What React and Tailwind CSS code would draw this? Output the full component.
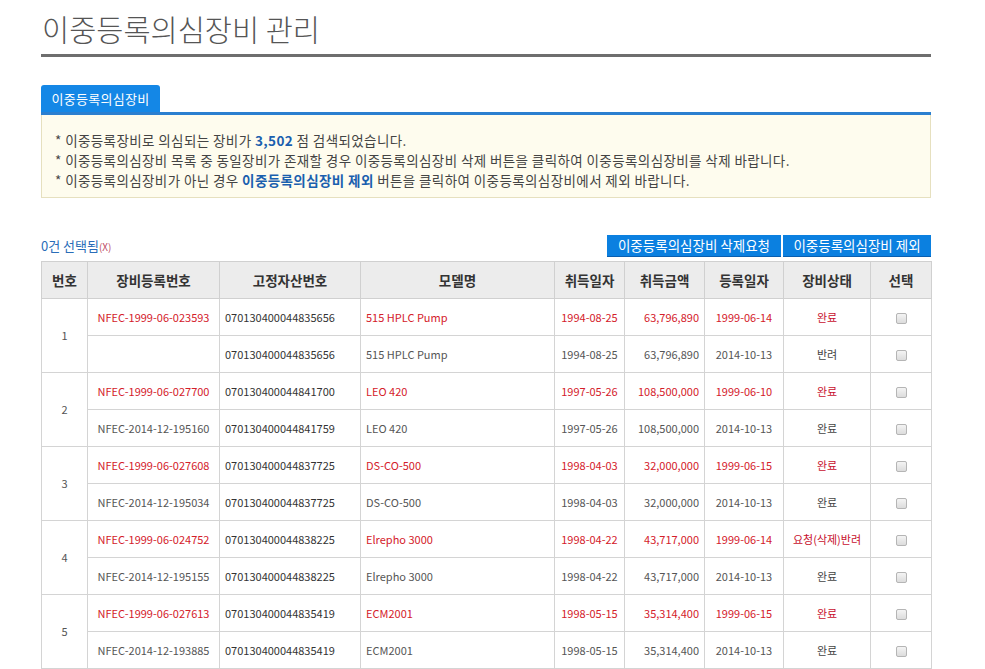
import React from "react";

const rows = [
  {
    n: 1,
    a: ["NFEC-1999-06-023593", "070130400044835656", "515 HPLC Pump", "1994-08-25", "63,796,890", "1999-06-14", "완료"],
    b: ["", "070130400044835656", "515 HPLC Pump", "1994-08-25", "63,796,890", "2014-10-13", "반려"],
  },
  {
    n: 2,
    a: ["NFEC-1999-06-027700", "070130400044841700", "LEO 420", "1997-05-26", "108,500,000", "1999-06-10", "완료"],
    b: ["NFEC-2014-12-195160", "070130400044841759", "LEO 420", "1997-05-26", "108,500,000", "2014-10-13", "완료"],
  },
  {
    n: 3,
    a: ["NFEC-1999-06-027608", "070130400044837725", "DS-CO-500", "1998-04-03", "32,000,000", "1999-06-15", "완료"],
    b: ["NFEC-2014-12-195034", "070130400044837725", "DS-CO-500", "1998-04-03", "32,000,000", "2014-10-13", "완료"],
  },
  {
    n: 4,
    a: ["NFEC-1999-06-024752", "070130400044838225", "Elrepho 3000", "1998-04-22", "43,717,000", "1999-06-14", "요청(삭제)반려"],
    b: ["NFEC-2014-12-195155", "070130400044838225", "Elrepho 3000", "1998-04-22", "43,717,000", "2014-10-13", "완료"],
  },
  {
    n: 5,
    a: ["NFEC-1999-06-027613", "070130400044835419", "ECM2001", "1998-05-15", "35,314,400", "1999-06-15", "완료"],
    b: ["NFEC-2014-12-193885", "070130400044835419", "ECM2001", "1998-05-15", "35,314,400", "2014-10-13", "완료"],
  },
];

const td = "border border-[#d4d4d4] h-[37px] p-0 text-[11px]";

function Cells({ d, red }) {
  const c = red ? "text-[#d4202a]" : "text-[#555]";
  return (
    <>
      <td className={`${td} ${c} text-center`}>{d[0]}</td>
      <td className={`${td} text-[#333] pl-[5px] text-left`}>{d[1]}</td>
      <td className={`${td} ${c} pl-[5px] text-left`}>{d[2]}</td>
      <td className={`${td} ${c} text-center`}>{d[3]}</td>
      <td className={`${td} ${c} pr-[5px] text-right`}>{d[4]}</td>
      <td className={`${td} ${c} text-center`}>{d[5]}</td>
      <td className={`${td} ${red ? "text-[#c8102e]" : "text-[#444]"} text-center`}>{d[6]}</td>
      <td className={`${td} text-center`}>
        <span className="inline-block w-[11px] h-[11px] rounded-[2px] border border-[#b5b5b5] bg-gradient-to-b from-[#f4f4f4] to-[#dcdcdc] align-middle" />
      </td>
    </>
  );
}

export default function App() {
  return (
    <div
      className="bg-white w-[985px] h-[669px] overflow-hidden"
      style={{ fontFamily: '"Noto Sans CJK KR", "Noto Sans", sans-serif' }}
    >
      <div className="ml-[41px] w-[890px]">
        <div className="pt-[8px] h-[54px] text-[29.5px] leading-[40px] font-light text-[#555] pl-[1px]">
          이중등록의심장비 관리
        </div>
        <div className="h-[3px] bg-[#6e6e6e]" />

        <div className="mt-[28px] flex">
          <div className="h-[27px] w-[119px] bg-[#1487e6] rounded-t-[3px] text-white text-[13px] tracking-[0.3px] leading-[27px] text-center">
            이중등록의심장비
          </div>
        </div>
        <div className="h-[3px] bg-[#2b7fd0]" />
        <div className="h-[83px] bg-[#fefcee] border border-[#e6e0bf] border-t-0 pt-[15px] pl-[13px] text-[13.5px] tracking-[0.4px] leading-[20px] text-[#444]">
          <div>
            * 이중등록장비로 의심되는 장비가 <span className="text-[#1a5fae] font-semibold">3,502</span> 점 검색되었습니다.
          </div>
          <div>
            * 이중등록의심장비 목록 중 동일장비가 존재할 경우 이중등록의심장비 삭제 버튼을 클릭하여 이중등록의심장비를 삭제 바랍니다.
          </div>
          <div>
            * 이중등록의심장비가 아닌 경우 <span className="text-[#1a5fae] font-semibold">이중등록의심장비 제외</span> 버튼을 클릭하여 이중등록의심장비에서 제외 바랍니다.
          </div>
        </div>

        <div className="mt-[37px] flex items-center justify-between h-[22px]">
          <div className="text-[13px] text-[#2a6db8] leading-[16px] pt-[1px]">
            0건 선택됨<span className="text-[#c0506a] text-[10px]">(X)</span>
          </div>
          <div className="flex gap-[2px]">
            <button className="h-[22px] w-[174px] bg-[#0b80e0] border-b border-[#0a5fb0] text-white text-[13.5px] leading-[21px]">
              이중등록의심장비 삭제요청
            </button>
            <button className="h-[22px] w-[148px] bg-[#0b80e0] border-b border-[#0a5fb0] text-white text-[13.5px] leading-[21px]">
              이중등록의심장비 제외
            </button>
          </div>
        </div>

        <table className="mt-[4px] w-[890px] table-fixed border-collapse">
          <colgroup>
            <col className="w-[46px]" />
            <col className="w-[132px]" />
            <col className="w-[141px]" />
            <col className="w-[194px]" />
            <col className="w-[70px]" />
            <col className="w-[80px]" />
            <col className="w-[79px]" />
            <col className="w-[87px]" />
            <col className="w-[61px]" />
          </colgroup>
          <thead>
            <tr className="bg-[#ececec]">
              {["번호", "장비등록번호", "고정자산번호", "모델명", "취득일자", "취득금액", "등록일자", "장비상태", "선택"].map((h) => (
                <th key={h} className="border border-[#d0d0d0] h-[37px] p-0 text-[13.5px] font-semibold text-[#333] text-center">
                  {h}
                </th>
              ))}
            </tr>
          </thead>
          <tbody>
            {rows.map((r) => (
              <React.Fragment key={r.n}>
                <tr>
                  <td rowSpan={2} className="border border-[#d4d4d4] p-0 text-center text-[11px] text-[#555]">
                    {r.n}
                  </td>
                  <Cells d={r.a} red />
                </tr>
                <tr>
                  <Cells d={r.b} />
                </tr>
              </React.Fragment>
            ))}
          </tbody>
        </table>
      </div>
    </div>
  );
}
